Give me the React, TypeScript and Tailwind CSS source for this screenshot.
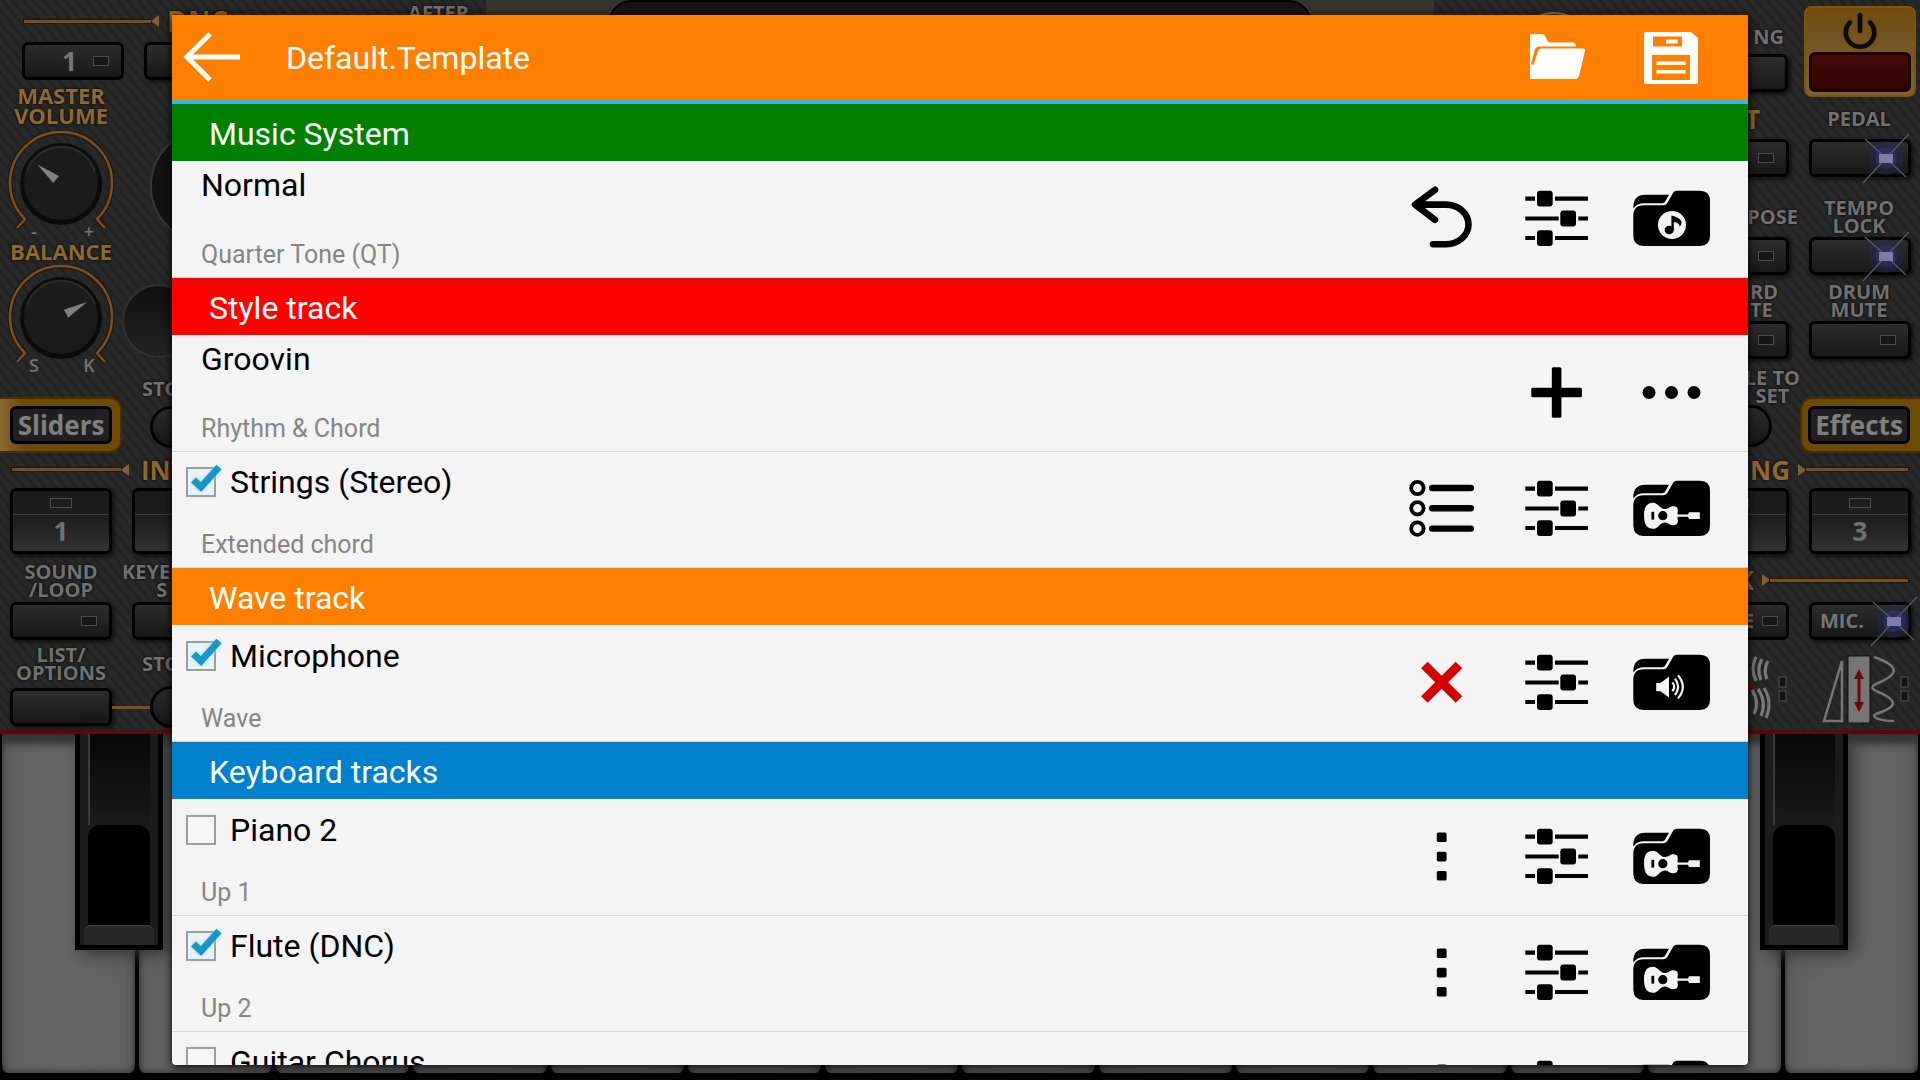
import React from "react";
import { Power } from "lucide-react";

type IconProps = { children: React.ReactNode };

const Glyph: React.FC<IconProps> = ({ children }) => (
  <svg viewBox="0 0 115 115" className="h-[115px] w-[115px]" aria-hidden="true">
    {children}
  </svg>
);

const UndoIcon = () => (
  <Glyph>
    <path
      d="M52 27.8 L32 42.6 L52 57.8 M33 42.6 H63 A22.5 19.8 0 0 1 63 82.2 H50"
      fill="none"
      stroke="#000"
      strokeWidth="6.6"
      strokeLinecap="round"
      strokeLinejoin="round"
    />
  </Glyph>
);

const MixerIcon = () => (
  <Glyph>
    <path
      d="M27.3 36.7H37M57 36.7H90M27.3 56.5H60.7M80.3 56.5H90M27.3 76H37M57 76H90"
      stroke="#000"
      strokeWidth="4.2"
    />
    <rect x="39" y="28.8" width="15.7" height="15.8" rx="3" />
    <rect x="62.3" y="48.6" width="15.7" height="15.8" rx="3" />
    <rect x="39" y="68.2" width="15.7" height="15.8" rx="3" />
  </Glyph>
);

const ListIcon = () => (
  <Glyph>
    {[36, 56.3, 76.6].map((y) => (
      <g key={y} stroke="#000">
        <circle cx="34.4" cy={y} r="6.2" fill="none" strokeWidth="3.8" />
        <path d={`M49.2 ${y}H87.8`} strokeWidth="6.4" strokeLinecap="round" />
      </g>
    ))}
  </Glyph>
);

const PlusIcon = () => (
  <Glyph>
    <rect x="33.3" y="51.7" width="50.6" height="9.6" rx="1.5" />
    <rect x="53.8" y="31.2" width="9.6" height="50.6" rx="1.5" />
  </Glyph>
);

const DotsIcon = () => (
  <Glyph>
    <circle cx="36" cy="56.5" r="6.5" />
    <circle cx="58.5" cy="56.5" r="6.5" />
    <circle cx="81" cy="56.5" r="6.5" />
  </Glyph>
);

const CrossIcon = () => (
  <Glyph>
    <path d="M41.4 39 L76 73.6 M76 39 L41.4 73.6" stroke="#d20000" strokeWidth="9.2" />
  </Glyph>
);

const KebabIcon = () => (
  <Glyph>
    {[32.5, 51.8, 71].map((y) => (
      <rect key={y} x="53.8" y={y} width="9.8" height="9.6" rx="1.6" />
    ))}
  </Glyph>
);

const FolderBase: React.FC<IconProps> = ({ children }) => (
  <Glyph>
    <path d="M20.3 44.5 Q20.8 32.7 32 32.7 H56 L52 39.8 Q51.2 41.2 49.4 41.2 H31 Q24 41.2 20.3 46.5Z" />
    <path d="M20.3 54 Q20.3 43.2 30.5 43.2 H50.4 Q53 43.2 54.3 41 L60.3 30.6 Q61.4 28.7 63.6 28.7 H87 Q97 28.7 97 39 V73.6 Q97 84 87 84 H30.5 Q20.3 84 20.3 73.6Z" />
    {children}
  </Glyph>
);

const MusicFolderIcon = () => (
  <FolderBase>
    <circle cx="59" cy="63" r="14" fill="#f4f4f4" />
    <ellipse cx="56.2" cy="68" rx="4.6" ry="4.2" />
    <path d="M58.4 68 V53.6 Q66 55 68.6 59.6 Q68.6 62.6 66.8 65 Q66.6 60.8 60.8 60 V68Z" />
  </FolderBase>
);

const GuitarFolderIcon = () => (
  <FolderBase>
    <path
      d="M31 63.6 C31 54 34.5 50.7 40 50.7 C45 50.7 46.5 56.5 51.5 57 C56 57 56 54.2 60.5 54.2 C64.5 54.2 65.4 57 64.6 60.4 L64.6 62.5 H75 L76 60.2 H86.8 V67 H76 L75 64.8 H64.6 L64.6 67 C65.4 70.4 64.5 73.2 60.5 73.2 C56 73.2 56 70.4 51.5 70.4 C46.5 71 45 76.8 40 76.8 C34.5 76.8 31 73.2 31 63.6Z"
      fill="#f4f4f4"
    />
    <circle cx="49.8" cy="63.7" r="4.6" />
    <path d="M39.8 59.8V67.6" stroke="#000" strokeWidth="2.8" />
  </FolderBase>
);

const SpeakerFolderIcon = () => (
  <FolderBase>
    <path d="M43.2 57 H47.5 L56 50.4 V71.4 L47.5 65.2 H43.2Z" fill="#f4f4f4" />
    <path
      d="M59.4 56.4 Q63 60.8 59.4 65.2 M62 52.6 Q68.2 60.8 62 69 M65 49.2 Q74.6 60.8 65 72.4"
      fill="none"
      stroke="#f4f4f4"
      strokeWidth="2.2"
    />
  </FolderBase>
);

type Action = { icon: React.FC; label: string };

const mixer: Action = { icon: MixerIcon, label: "Mixer" };
const guitar: Action = { icon: GuitarFolderIcon, label: "Select instrument" };
const more: Action = { icon: KebabIcon, label: "More" };

type Track = { name: string; detail?: string; checked?: boolean; actions: Action[] };

const sections: { title: string; color: string; tracks: Track[] }[] = [
  {
    title: "Music System",
    color: "bg-[#008000]",
    tracks: [
      {
        name: "Normal",
        detail: "Quarter Tone (QT)",
        actions: [
          { icon: UndoIcon, label: "Reset" },
          mixer,
          { icon: MusicFolderIcon, label: "Select scale" },
        ],
      },
    ],
  },
  {
    title: "Style track",
    color: "bg-[#ff0000]",
    tracks: [
      {
        name: "Groovin",
        detail: "Rhythm & Chord",
        actions: [
          { icon: PlusIcon, label: "Add" },
          { icon: DotsIcon, label: "Options" },
        ],
      },
      {
        name: "Strings (Stereo)",
        detail: "Extended chord",
        checked: true,
        actions: [{ icon: ListIcon, label: "List" }, mixer, guitar],
      },
    ],
  },
  {
    title: "Wave track",
    color: "bg-[#ff8000]",
    tracks: [
      {
        name: "Microphone",
        detail: "Wave",
        checked: true,
        actions: [
          { icon: CrossIcon, label: "Remove" },
          mixer,
          { icon: SpeakerFolderIcon, label: "Select wave" },
        ],
      },
    ],
  },
  {
    title: "Keyboard tracks",
    color: "bg-[#0080cc]",
    tracks: [
      { name: "Piano 2", detail: "Up 1", checked: false, actions: [more, mixer, guitar] },
      { name: "Flute (DNC)", detail: "Up 2", checked: true, actions: [more, mixer, guitar] },
      { name: "Guitar Chorus", checked: false, actions: [more, mixer, guitar] },
    ],
  },
];

const TrackRow: React.FC<{ track: Track }> = ({ track }) => (
  <li className="flex min-h-[116px] shrink-0 border-b border-[#d4d4d4] pr-5">
    <div className="flex flex-1 flex-col justify-between pb-[6px]">
      {track.checked === undefined ? (
        <span className="pt-[3px] pl-[29px] text-[32px] leading-10 text-black">{track.name}</span>
      ) : (
        <label className="relative flex items-center gap-[14px] self-start pt-[10px] pl-[14px] text-[32px] leading-10 text-black">
          <input
            type="checkbox"
            defaultChecked={track.checked}
            className="peer h-[30px] w-[30px] appearance-none border-2 border-[#9c9c9c] bg-[#f6f6f6] checked:bg-[#e8f3f9]"
          />
          <svg
            viewBox="0 0 40 40"
            className="absolute left-[14px] hidden h-10 w-10 drop-shadow-[0_0_2px_#a8dcf2] peer-checked:block"
            aria-hidden="true"
          >
            <path d="M7.5 18 L15 25 L33 5" fill="none" stroke="#1896c8" strokeWidth="7" />
          </svg>
          {track.name}
        </label>
      )}
      {track.detail && <span className="pl-[29px] text-[25px] leading-8 text-[#858585]">{track.detail}</span>}
    </div>
    {track.actions.map(({ icon: Icon, label }) => (
      <button key={label} type="button" aria-label={label} className="h-[115px] w-[115px]">
        <Icon />
      </button>
    ))}
  </li>
);

const TemplateDialog = () => (
  <div
    role="dialog"
    aria-label="Default.Template"
    className="flex flex-1 flex-col overflow-hidden rounded-b bg-[#f4f4f4] font-[Roboto,sans-serif] shadow-[0_2px_10px_#000]"
  >
    <header className="flex h-[89px] shrink-0 items-center border-b-4 border-[#33b5e5] bg-[#ff8000] pr-5 text-white">
      <button type="button" aria-label="Back" className="pl-2">
        <svg viewBox="0 0 64 60" className="h-[60px] w-16" aria-hidden="true">
          <path d="M30 6 L7 29 L30 52 M6 29 H60" fill="none" stroke="#fff" strokeWidth="5" />
        </svg>
      </button>
      <h1 className="flex-1 pl-[42px] text-[32px] leading-10">Default.Template</h1>
      <button type="button" aria-label="Open" className="flex w-[115px] justify-center">
        <svg viewBox="0 0 58 56" className="h-14 w-[58px]" aria-hidden="true">
          <path
            d="M3 49 V6 Q3 4 5 4 H15 Q17 4 18 6 L21.500 12.500 H46 Q48.500 12.500 49 16.500 H12 Q9 16.500 8 19 L4 34 L6.500 35 L11 21.500 Q12 18.500 14 18.500 H56 Q58.500 18.500 58 21 L52 46 Q51 49 49 49Z"
            fill="#fff"
          />
        </svg>
      </button>
      <button type="button" aria-label="Save" className="flex w-[115px] justify-center">
        <svg viewBox="0 0 54 52" className="h-[52px] w-[54px]" aria-hidden="true">
          <path d="M2 0 H47 L54 6 V50 Q54 52 52 52 H2 Q0 52 0 50 V2 Q0 0 2 0Z" fill="#fff" />
          <path d="M9 4.500 H38 V14.500 H9Z M8 23 H46 V48 H8Z" fill="#ff8000" />
          <path
            d="M22 7.500 H33.500 V11.500 H22Z M12.500 29.500 H41.500 V33 H12.500Z M12.500 38 H41.500 V41.500 H12.500Z"
            fill="#fff"
          />
        </svg>
      </button>
    </header>
    <div className="flex-1 overflow-hidden">
      {sections.map((section) => (
        <section key={section.title}>
          <h2
            className={`h-[58px] border-b border-[#e8eef0] pt-px pl-[37px] text-[32px] leading-[58px] text-white ${section.color}`}
          >
            {section.title}
          </h2>
          <ul>
            {section.tracks.map((track) => (
              <TrackRow key={track.name} track={track} />
            ))}
          </ul>
        </section>
      ))}
    </div>
  </div>
);

const Led = () => <span className="block h-[10px] w-4 border border-[#4c4c4c] bg-[#161616]" />;

const Star = () => (
  <svg viewBox="0 0 60 60" className="-my-4 -mr-4 h-[60px] w-[60px] shrink-0" aria-hidden="true">
    <circle cx="30" cy="30" r="17" fill="#2a2a6a" opacity="0.3" />
    <circle cx="30" cy="30" r="11" fill="#3a3a8a" opacity="0.4" />
    <path d="M7 55 L30 30 L53 6 M9 11 L30 30 L50 49" fill="none" stroke="#55556a" strokeWidth="1.4" />
    <rect x="23" y="26" width="14" height="9" fill="#7c7ca6" />
  </svg>
);

const Pad: React.FC<{ text?: string; light?: "led" | "star"; label: string }> = ({ text, light, label }) => (
  <button
    type="button"
    aria-label={text ? undefined : label}
    className="flex h-[38px] w-[102px] shrink-0 items-center justify-between rounded-md border-3 border-black bg-linear-to-b from-[#2c2c2c] to-[#181818] px-2 text-[20px] font-bold text-[#757575] shadow-[2px_2px_4px_#0c0c0c]"
  >
    <span>{text}</span>
    {light === "led" && (
      <span className="pr-1">
        <Led />
      </span>
    )}
    {light === "star" && <Star />}
  </button>
);

const TallPad: React.FC<{ text: string }> = ({ text }) => (
  <button
    type="button"
    className="flex h-[66px] w-[102px] shrink-0 flex-col items-center rounded-md border-3 border-black bg-linear-to-b from-[#1c1c1c] via-[#1e1e1e] to-[#333] text-[26px] leading-8 font-bold text-[#707070] shadow-[2px_2px_4px_#0c0c0c]"
  >
    <span className="flex h-6 w-full items-center justify-center border-b border-[#3c3c3c]">
      <span className="block h-[10px] w-[22px] border border-[#4c4c4c]" />
    </span>
    {text}
  </button>
);

const RoundPad = () => (
  <span className="block h-[42px] w-[42px] shrink-0 rounded-full border-3 border-black bg-linear-to-b from-[#2c2c2c] to-[#161616]" />
);

const Knob: React.FC<{ angle: number; left: string; right: string }> = ({ angle, left, right }) => (
  <svg viewBox="0 0 122 110" className="h-[110px] w-[122px]" aria-hidden="true">
    <path d="M17 97 L25 88 A51 51 0 1 1 97 88 L105 97" fill="none" stroke="#21150a" strokeWidth="5" />
    <path d="M17 97 L25 88 A51 51 0 1 1 97 88 L105 97" fill="none" stroke="#7a4f26" strokeWidth="2.600" />
    <circle cx="61" cy="53" r="41" fill="#0b0b0b" />
    <circle cx="61" cy="52" r="37" fill="#1b1b1b" />
    <path d="M27 40 A36 36 0 0 1 95 40" fill="none" stroke="#2b2b2b" strokeWidth="2" />
    <path d="M60 22 L65 46 L56 46Z" fill="#808080" transform={`rotate(${angle} 61 52)`} />
    <text x="34" y="107" textAnchor="middle" fontSize="18" fontWeight="600" fill="#757575">
      {left}
    </text>
    <text x="89" y="107" textAnchor="middle" fontSize="18" fontWeight="600" fill="#757575">
      {right}
    </text>
  </svg>
);

const Line: React.FC<{ flip?: boolean }> = ({ flip }) => (
  <span className={flip ? "flex min-w-0 flex-1 flex-row-reverse items-center" : "flex min-w-0 flex-1 items-center"}>
    <span className="h-[3px] flex-1 bg-[#7a4f26] outline outline-[#21150a]" />
    <svg viewBox="0 0 8 12" className={flip ? "h-3 w-2" : "h-3 w-2 rotate-180"} aria-hidden="true">
      <path d="M0 0 L8 6 L0 12Z" fill="#85602f" />
    </svg>
  </span>
);

const Caption: React.FC<{ lines: string[] }> = ({ lines }) => (
  <span className="flex flex-col text-center text-[20px] leading-[18px] font-bold whitespace-pre text-[#717171] [text-shadow:0_0_3px_#000]">
    {lines.map((line) => (
      <span key={line}>{line}</span>
    ))}
  </span>
);

const goldText = "text-[#8f6833] [text-shadow:0_0_3px_#000]";

const LeftPanel = () => (
  <div className="flex w-[240px] flex-col overflow-hidden">
    <div className="flex h-[42px] items-center gap-2 pl-6">
      <div className="flex w-[135px]">
        <Line />
      </div>
      <span className={`text-[28px] leading-7 font-bold ${goldText}`}>DNC</span>
    </div>
    <div className="flex gap-5 pl-[22px]">
      <button
        type="button"
        className="flex h-[38px] w-[102px] shrink-0 items-center justify-end gap-4 rounded-md border-3 border-black bg-linear-to-b from-[#2c2c2c] to-[#181818] pr-3 text-[26px] font-bold text-[#757575]"
      >
        1 <Led />
      </button>
      <Pad label="DNC 2" />
    </div>
    <div className="flex h-[379px]">
      <div className="flex w-[122px] shrink-0 flex-col items-center pt-[5px]">
        <span className={`pb-[6px] text-center text-[22px] leading-5 font-bold ${goldText}`}>
          MASTER
          <br />
          VOLUME
        </span>
        <Knob angle={-50} left="-" right="+" />
        <span className={`pb-1 text-[22px] leading-5 font-bold ${goldText}`}>BALANCE</span>
        <Knob angle={62} left="S" right="K" />
        <div className="mt-[22px] flex h-14 w-full shrink-0 items-center rounded-r-xl border-2 border-l-0 border-[#4a2c08] bg-linear-to-r from-[#8a6a30] via-[#6e4a08] via-20% to-[#6e4a08] pl-[10px]">
          <button
            type="button"
            className="h-[38px] w-[102px] rounded-md border-3 border-black bg-[#202020] text-[26px] leading-7 font-bold text-[#808080]"
          >
            Sliders
          </button>
        </div>
      </div>
      <div className="flex flex-col pt-12">
        <span className="ml-7 h-[116px] w-[116px] rounded-full border-2 border-[#383838] bg-[#121212]" />
        <span className="mt-10 h-[74px] w-[74px] rounded-full border-2 border-[#303030] bg-linear-to-b from-[#101010] to-[#222]" />
        <div className="flex flex-col items-start gap-2 pt-[22px] pl-5">
          <Caption lines={["STO"]} />
          <div className="pl-2">
            <RoundPad />
          </div>
        </div>
      </div>
    </div>
    <div className="flex h-[29px] items-center gap-3 pb-2 pl-3">
      <div className="flex w-[117px]">
        <Line />
      </div>
      <span className={`text-[26px] leading-7 font-bold ${goldText}`}>INT</span>
    </div>
    <div className="flex gap-5 pl-[10px]">
      <TallPad text="1" />
      <TallPad text="" />
    </div>
    <div className="flex h-12 pt-[9px]">
      <div className="w-[122px]">
        <Caption lines={["SOUND", "/LOOP"]} />
      </div>
      <Caption lines={["KEYE", "      S"]} />
    </div>
    <div className="flex gap-5 pl-[10px]">
      <Pad label="Sound loop" light="led" />
      <Pad label="Keyboard set" />
    </div>
    <div className="flex h-[46px] items-center pt-px">
      <div className="w-[122px]">
        <Caption lines={["LIST/", "OPTIONS"]} />
      </div>
      <div className="pl-5">
        <Caption lines={["STO"]} />
      </div>
    </div>
    <div className="flex items-center pl-[10px]">
      <Pad label="List options" />
      <span className="h-[3px] w-[38px] bg-[#7a4f26]" />
      <RoundPad />
    </div>
  </div>
);

type PadPairProps = { a: string[]; b: string[]; light: "led" | "star"; inset?: string; gold?: boolean };

const PadPair: React.FC<PadPairProps> = ({ a, b, light, inset = "", gold }) => (
  <>
    <div className={gold ? "flex items-end pb-2" : "flex items-end pb-[2px]"}>
      <div className="flex flex-1 items-center justify-end">
        {gold ? (
          <span className={`text-[26px] leading-6 font-bold ${goldText} ${inset}`}>{a}</span>
        ) : (
          <div className={inset}>
            <Caption lines={a} />
          </div>
        )}
        <div className="w-[122px]">
          <Caption lines={b} />
        </div>
      </div>
    </div>
    <div className="flex justify-end gap-5 pr-[9px]">
      <Pad label={a.join(" ")} light="led" />
      <Pad label={b.join(" ")} light={light} />
    </div>
  </>
);

const RightPanel = () => (
  <div className="flex w-[240px] flex-col overflow-hidden">
    <div className="flex justify-end gap-4 pt-[6px] pr-1">
      <div className="flex flex-col items-end justify-between pt-[22px]">
        <div className="pr-1">
          <Caption lines={["NG"]} />
        </div>
        <div className="pb-[5px]">
          <Pad label="Tuning" />
        </div>
      </div>
      <div className="flex h-[91px] w-[112px] flex-col items-center justify-between rounded-lg border-2 border-[#855208] bg-linear-to-b from-[#6e4c08] to-[#7c6440] pt-1 pb-[3px]">
        <Power size={38} strokeWidth={3} color="#0c0c0c" />
        <button
          type="button"
          aria-label="Power"
          className="h-10 w-[102px] rounded-md border-3 border-[#180404] bg-linear-to-b from-[#440a0a] to-[#340303]"
        />
      </div>
    </div>
    <div className="grid h-[262px] grid-rows-[42px_38px_60px_38px_46px_38px]">
      <PadPair a={["T"]} b={["PEDAL"]} light="star" inset="pr-[38px]" gold />
      <PadPair a={["POSE"]} b={["TEMPO", "LOCK"]} light="star" />
      <PadPair a={["RD", "TE "]} b={["DRUM", "MUTE"]} light="led" inset="pr-5" />
    </div>
    <div className="flex h-[100px] justify-end">
      <div className="flex flex-col items-end pt-[10px]">
        <Caption lines={["LE TO", "SET"]} />
        <div className="pr-7">
          <RoundPad />
        </div>
      </div>
      <div className="mt-[38px] flex h-14 w-[120px] items-center rounded-l-xl border-2 border-r-0 border-[#4a2c08] bg-[#6e4a08] pl-[6px]">
        <button
          type="button"
          className="h-[38px] w-[102px] rounded-md border-3 border-black bg-[#202020] text-[26px] leading-7 font-bold text-[#808080]"
        >
          Effects
        </button>
      </div>
    </div>
    <div className="flex h-[29px] items-center justify-end gap-2 pr-3 pb-2">
      <span className={`text-[26px] leading-7 font-bold ${goldText}`}>NG</span>
      <div className="flex w-[110px]">
        <Line flip />
      </div>
    </div>
    <div className="flex justify-end gap-5 pr-[9px]">
      <TallPad text="" />
      <TallPad text="3" />
    </div>
    <div className="flex h-12 items-center justify-end gap-2 pt-1 pr-3">
      <span className={`text-[26px] leading-7 font-bold ${goldText}`}>K</span>
      <div className="flex w-[146px]">
        <Line flip />
      </div>
    </div>
    <div className="flex justify-end gap-5 pr-[9px]">
      <button
        type="button"
        className="flex h-[38px] w-[102px] shrink-0 items-center justify-end gap-2 rounded-md border-3 border-black bg-linear-to-b from-[#2c2c2c] to-[#181818] pr-2 text-[20px] font-bold text-[#757575]"
      >
        E <Led />
      </button>
      <Pad label="Mic" text="MIC." light="star" />
    </div>
    <div className="flex justify-end pt-3">
      <svg viewBox="0 0 172 74" className="h-[74px] w-[172px]" aria-hidden="true">
        <g fill="none" stroke="#777" strokeWidth="3.200">
          <path d="M8 5 Q2 16 8 29 M14 7 Q8 17 13 28 M20 9 Q15 18 19 27" />
          <path d="M4 38 Q12 50 6 62 M10 37 Q19 50 13 64 M16 36 Q25 50 18 66" />
          <path d="M94 9 V69 H76Z" strokeWidth="2.500" />
          <path
            d="M126 5 C152 14 152 22 128 32 C122 35 124 37 130 40 C154 50 146 56 128 62 C122 65 132 69 146 69"
            strokeWidth="2.500"
          />
        </g>
        <rect x="100" y="4" width="22" height="67" fill="#767676" stroke="#111" />
        <path d="M111 24 V54" stroke="#6c0808" strokeWidth="3" />
        <path d="M106 27 L111 17 L116 27Z M106 50 L111 60 L116 50Z" fill="#6c0808" />
        <path d="M0 40 L8 34 L2 32Z" fill="#6c0808" />
        <g fill="#111" stroke="#555">
          <rect x="31" y="25" width="7" height="10" />
          <rect x="31" y="39" width="7" height="10" />
          <rect x="153" y="25" width="7" height="10" />
          <rect x="153" y="39" width="7" height="10" />
        </g>
      </svg>
    </div>
  </div>
);

const BlackKey = () => (
  <span className="flex h-[216px] w-[88px] flex-col border-x-[5px] border-b-[5px] border-black bg-[#1c1c1c] px-2 shadow-[6px_4px_16px_#333]">
    <span className="flex-1 border-l-2 border-[#3a3a3a] bg-linear-to-b from-[#080808] to-[#1a1a1a]" />
    <span className="h-[100px] rounded-t-xl bg-black" />
    <span className="-mx-1 h-5 rounded-t-lg border-t border-[#444] bg-[#262626]" />
  </span>
);

const Keyboard = () => (
  <div className="relative flex flex-1 border-t-4 border-[#60000e] bg-black pb-[7px]">
    {Array.from({ length: 14 }, (_, i) => (
      <span
        key={i}
        className="flex-1 rounded-b-lg border-x-2 border-black bg-linear-to-r from-[#606060] via-[#666] to-[#606060] shadow-[inset_0_10px_8px_#333,inset_0_-3px_4px_#444]"
      />
    ))}
    {/* black keys sit over the white ones */}
    <div className="absolute inset-x-0 top-0 flex justify-between pr-[72px] pl-[75px]">
      <BlackKey />
      <BlackKey />
    </div>
  </div>
);

const Console = () => (
  <div className="flex h-[730px] shrink-0 justify-between bg-[repeating-linear-gradient(50deg,#282828_0px,#282828_5px,#222222_6px,#222222_8px)]">
    <LeftPanel />
    <div className="flex flex-1 items-start overflow-hidden">
      <div className="w-[246px] pt-1 pl-[151px]">
        <Caption lines={["AFTER"]} />
      </div>
      <div className="flex h-20 flex-1 justify-center bg-[#37342f] px-[122px]">
        <span className="flex-1 rounded-t-3xl border-2 border-black bg-[#151515]" />
      </div>
      <div className="w-[246px] pt-3 pl-[80px]">
        <span className="block h-20 w-20 rounded-full border-2 border-[#777]" />
      </div>
    </div>
    <RightPanel />
  </div>
);

export default function App() {
  return (
    <main className="relative flex h-screen flex-col overflow-hidden bg-black font-['Open_Sans',sans-serif]">
      <Console />
      <Keyboard />
      <div className="absolute inset-0 flex px-[172px] py-[15px]">
        <TemplateDialog />
      </div>
    </main>
  );
}
